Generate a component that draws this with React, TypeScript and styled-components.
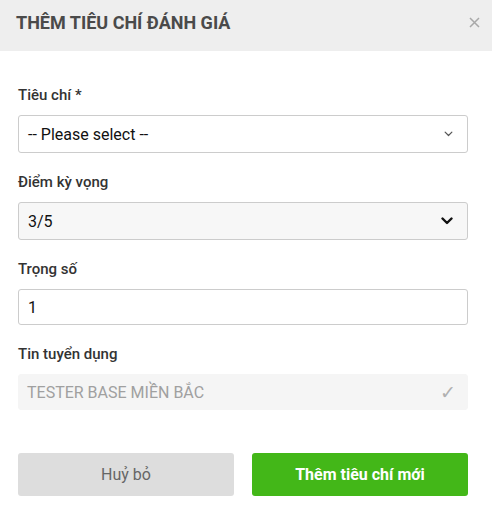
import * as React from 'react';
import styled, { createGlobalStyle } from 'styled-components';

const GlobalStyle = createGlobalStyle`
  html, body {
    margin: 0;
    padding: 0;
    background: #ffffff;
  }
  body {
    font-family: Roboto, "Noto Sans", "Liberation Sans", sans-serif;
  }
`

const Modal = styled.div`
  width: 492px;
  height: 522px;
  background: #ffffff;
  display: flex;
  flex-direction: column;
`

const Header = styled.header`
  display: flex;
  align-items: center;
  justify-content: space-between;
  height: 51px;
  padding: 0 10px 6px 16px;
  background: #eeeeee;
  box-sizing: border-box;
`

const Title = styled.h4`
  margin: 0;
  font-size: 18px;
  font-weight: 700;
  color: #4a4a4a;
`

const CloseButton = styled.button`
  border: 0;
  background: transparent;
  padding: 0;
  width: 16px;
  height: 16px;
  display: flex;
  align-items: center;
  justify-content: center;
  cursor: pointer;
`

const Body = styled.div`
  display: flex;
  flex-direction: column;
  padding: 36px 24px 0 18px;
`

const Field = styled.div`
  display: flex;
  flex-direction: column;
  margin-bottom: 21px;
`

const Label = styled.label`
  font-size: 15px;
  font-weight: 500;
  color: #333333;
  line-height: 16px;
  margin-bottom: 12px;
`

const Box = styled.div<{ $variant: 'select' | 'plain' | 'gray' | 'disabled' }>`
  display: flex;
  align-items: center;
  justify-content: space-between;
  box-sizing: border-box;
  height: ${p => (p.$variant === 'select' || p.$variant === 'gray' ? 38 : 36)}px;
  padding: 0 ${p => (p.$variant === 'disabled' ? 11 : 14)}px 0 ${p => (p.$variant === 'disabled' ? 8 : 9)}px;
  border: 1px solid ${p => (p.$variant === 'disabled' ? '#f5f5f5' : '#cccccc')};
  border-radius: 3px;
  background: ${p =>
    p.$variant === 'gray' ? '#f7f7f7' : p.$variant === 'disabled' ? '#f5f5f5' : '#ffffff'};
  font-size: 16px;
  color: ${p => (p.$variant === 'disabled' ? '#a0a0a0' : '#111111')};
`

const Check = styled.span`
  color: #b0b0b0;
  font-size: 19px;
`

const Footer = styled.div`
  display: grid;
  grid-template-columns: 216px 216px;
  column-gap: 18px;
  padding: 22px 24px 0 18px;
`

const Button = styled.button<{ $primary?: boolean }>`
  height: 43px;
  border: 0;
  border-radius: 3px;
  font-family: inherit;
  font-size: 16px;
  font-weight: ${p => (p.$primary ? 700 : 400)};
  color: ${p => (p.$primary ? '#ffffff' : '#666666')};
  background: ${p => (p.$primary ? '#43b718' : '#dddddd')};
  cursor: pointer;
`

const Chevron = ({ bold }: { bold?: boolean }) => (
  <svg width={bold ? 12 : 9} height={bold ? 8 : 6} viewBox="0 0 12 8">
    <path
      d="M1.5 1.5 L6 6 L10.5 1.5"
      fill="none"
      stroke={bold ? '#111' : '#555'}
      strokeWidth={bold ? 2.4 : 1.6}
      strokeLinecap="round"
      strokeLinejoin="round"
    />
  </svg>
)

const App = () => (
  <>
    <GlobalStyle />
    <Modal>
      <Header>
        <Title>THÊM TIÊU CHÍ ĐÁNH GIÁ</Title>
        <CloseButton aria-label="close">
          <svg width="11" height="11" viewBox="0 0 11 11">
            <path d="M1 1 L10 10 M10 1 L1 10" stroke="#a8a8a8" strokeWidth="1.5" />
          </svg>
        </CloseButton>
      </Header>
      <Body>
        <Field>
          <Label>Tiêu chí *</Label>
          <Box $variant="select">
            <span>-- Please select --</span>
            <Chevron />
          </Box>
        </Field>
        <Field>
          <Label>Điểm kỳ vọng</Label>
          <Box $variant="gray">
            <span>3/5</span>
            <Chevron bold />
          </Box>
        </Field>
        <Field>
          <Label>Trọng số</Label>
          <Box $variant="plain">
            <span>1</span>
          </Box>
        </Field>
        <Field>
          <Label>Tin tuyển dụng</Label>
          <Box $variant="disabled">
            <span>TESTER BASE MIỀN BẮC</span>
            <Check>✓</Check>
          </Box>
        </Field>
      </Body>
      <Footer>
        <Button>Huỷ bỏ</Button>
        <Button $primary>Thêm tiêu chí mới</Button>
      </Footer>
    </Modal>
  </>
)

export default App;
